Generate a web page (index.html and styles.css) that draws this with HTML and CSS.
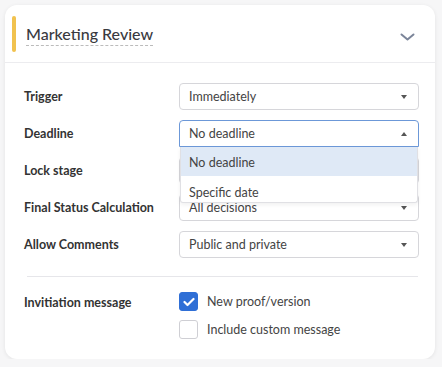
FILE: index.html
```html
<!DOCTYPE html>
<html lang="en">
<head>
  <meta charset="UTF-8">
  <title>Marketing Review</title>
  <link rel="stylesheet" href="styles.css">
</head>
<body>
  <div class="card">
    <div class="card-header">
      <span class="stage-bar"></span>
      <h2 class="stage-title">Marketing Review</h2>
      <svg class="collapse" width="15" height="8" viewBox="0 0 15 8">
        <path d="M1.5 1.5 L7.5 6.5 L13.5 1.5" fill="none" stroke="#7b8599" stroke-width="2" stroke-linecap="round" stroke-linejoin="round"/>
      </svg>
    </div>

    <div class="card-body">
      <div class="form-grid">
        <label class="field-label">Trigger</label>
        <div class="select"><span>Immediately</span><i class="caret"></i></div>

        <label class="field-label">Deadline</label>
        <div class="select-wrap">
          <div class="select open"><span>No deadline</span><i class="caret up"></i></div>
          <ul class="dropdown">
            <li class="active">No deadline</li>
            <li>Specific date</li>
          </ul>
        </div>

        <!-- hidden under the open dropdown -->
        <label class="field-label">Lock stage</label>
        <div class="select"><span></span><i class="caret"></i></div>

        <label class="field-label">Final Status Calculation</label>
        <div class="select"><span>All decisions</span><i class="caret"></i></div>

        <label class="field-label">Allow Comments</label>
        <div class="select"><span>Public and private</span><i class="caret"></i></div>
      </div>

      <hr class="divider">

      <div class="form-grid invite">
        <label class="field-label">Invitiation message</label>
        <div class="checks">
          <label class="check">
            <span class="box checked">
              <svg width="12" height="10" viewBox="0 0 12 10"><path d="M1.5 5 L4.5 8 L10.5 2" fill="none" stroke="#fff" stroke-width="2.2" stroke-linecap="round" stroke-linejoin="round"/></svg>
            </span>
            New proof/version
          </label>
          <label class="check">
            <span class="box"></span>
            Include custom message
          </label>
        </div>
      </div>
    </div>
  </div>
</body>
</html>
```

FILE: styles.css
```css
* {
  margin: 0;
  padding: 0;
  box-sizing: border-box;
}

body {
  background: #f6f6f7;
  font-family: 'Lato', 'Liberation Sans', sans-serif;
  color: #333;
  padding: 5px 7px 0 5px;
}

.card {
  width: 430px;
  height: 354px;
  background: #fff;
  border-radius: 12px;
  box-shadow: 0 1px 4px rgba(0, 0, 0, 0.08);
}

.card-header {
  display: flex;
  align-items: center;
  height: 58px;
  padding: 0 20px 0 7px;
  border-bottom: 1px solid #ececef;
}

.stage-bar {
  width: 4px;
  height: 36px;
  border-radius: 2px;
  background: #f1c24f;
  margin-right: 10px;
}

.stage-title {
  font-size: 16px;
  font-weight: 500;
  color: #3a3a3f;
  border-bottom: 1px dashed #bbb;
  padding-bottom: 2px;
  margin-top: 3px;
}

.collapse {
  margin-left: auto;
  margin-top: 6px;
}

.card-body {
  padding: 20px 16px 20px 19px;
}

.form-grid {
  display: grid;
  grid-template-columns: 155px 240px;
  row-gap: 10px;
  align-items: center;
}

.field-label {
  font-size: 12.5px;
  font-weight: 700;
  color: #333;
}

.select {
  display: flex;
  align-items: center;
  justify-content: space-between;
  height: 27px;
  padding: 0 11px 0 9px;
  border: 1px solid #d6d6da;
  border-radius: 4px;
  background: #fff;
  font-size: 12.5px;
  color: #444;
}

.select.open {
  border-color: #6c98d8;
  border-bottom-left-radius: 0;
  border-bottom-right-radius: 0;
}

.caret {
  width: 0;
  height: 0;
  border-left: 3.5px solid transparent;
  border-right: 3.5px solid transparent;
  border-top: 4px solid #555;
}

.caret.up {
  border-top: none;
  border-bottom: 4px solid #555;
}

.select-wrap {
  position: relative;
}

.dropdown {
  position: absolute;
  top: 27px;
  left: 1px;
  right: 1px;
  list-style: none;
  background: #fff;
  border: 1px solid #e0e0e4;
  border-top: none;
  border-radius: 0 0 3px 3px;
  box-shadow: 0 2px 4px rgba(0, 0, 0, 0.06);
  z-index: 2;
  font-size: 12.5px;
  color: #444;
}

.dropdown li {
  height: 29px;
  line-height: 31px;
  padding-left: 8px;
}

.dropdown li:last-child {
  height: 26px;
  line-height: 33px;
}

.dropdown li.active {
  background: #dfe9f6;
}

.divider {
  border: none;
  border-top: 1px solid #e6e6ea;
  margin: 18px 1px 0 3px;
}

.invite {
  margin-top: 15px;
  align-items: start;
}

.invite .field-label {
  margin-top: 3px;
}

.checks {
  display: flex;
  flex-direction: column;
  gap: 9px;
}

.check {
  display: flex;
  align-items: center;
  gap: 9px;
  font-size: 12.5px;
  color: #444;
}

.box {
  display: flex;
  align-items: center;
  justify-content: center;
  width: 19px;
  height: 19px;
  border: 1px solid #cfcfd4;
  border-radius: 3px;
  background: #fff;
}

.box.checked {
  background: #2f6fd6;
  border-color: #2f6fd6;
}
```
